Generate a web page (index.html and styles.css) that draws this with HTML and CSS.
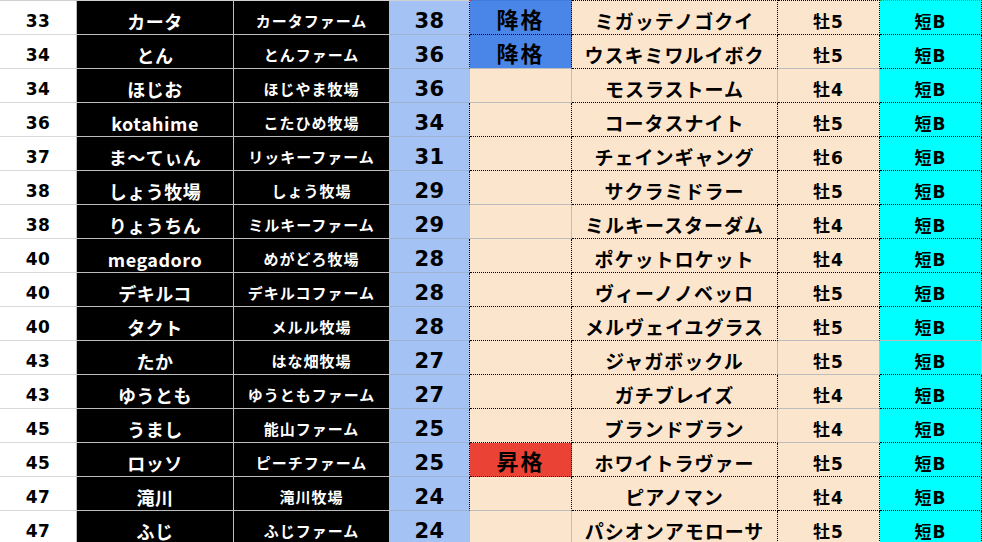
FILE: index.html
```html
<!DOCTYPE html>
<html lang="ja">
<head>
<meta charset="utf-8">
<title>Sheet</title>
<link rel="stylesheet" href="styles.css">
</head>
<body>
<div class="sheet">
  <div class="row first">
    <div class="c rk">33</div><div class="c nm">カータ</div><div class="c fm">カータファーム</div><div class="c sc dr">38</div><div class="c st down db dr top-red">降格</div><div class="c hs db dr top-dot">ミガッテノゴクイ</div><div class="c sx db dr top-dot">牡5</div><div class="c gr db dr top-green">短B</div>
  </div>
  <div class="row">
    <div class="c rk">34</div><div class="c nm">とん</div><div class="c fm">とんファーム</div><div class="c sc dr">36</div><div class="c st down dr">降格</div><div class="c hs db dr">ウスキミワルイボク</div><div class="c sx dr">牡5</div><div class="c gr db dr">短B</div>
  </div>
  <div class="row">
    <div class="c rk">34</div><div class="c nm">ほじお</div><div class="c fm">ほじやま牧場</div><div class="c sc">36</div><div class="c st"></div><div class="c hs db">モスラストーム</div><div class="c sx db">牡4</div><div class="c gr db dr">短B</div>
  </div>
  <div class="row">
    <div class="c rk">36</div><div class="c nm">kotahime</div><div class="c fm">こたひめ牧場</div><div class="c sc dr">34</div><div class="c st db dr"></div><div class="c hs db dr">コータスナイト</div><div class="c sx db dr">牡5</div><div class="c gr db dr">短B</div>
  </div>
  <div class="row">
    <div class="c rk">37</div><div class="c nm">ま〜てぃん</div><div class="c fm">リッキーファーム</div><div class="c sc dr">31</div><div class="c st db dr"></div><div class="c hs db dr">チェインギャング</div><div class="c sx db dr">牡6</div><div class="c gr db dr">短B</div>
  </div>
  <div class="row">
    <div class="c rk">38</div><div class="c nm">しょう牧場</div><div class="c fm">しょう牧場</div><div class="c sc dr">29</div><div class="c st dr"></div><div class="c hs db dr">サクラミドラー</div><div class="c sx db dr">牡5</div><div class="c gr db dr">短B</div>
  </div>
  <div class="row">
    <div class="c rk">38</div><div class="c nm">りょうちん</div><div class="c fm">ミルキーファーム</div><div class="c sc">29</div><div class="c st"></div><div class="c hs db dr">ミルキースターダム</div><div class="c sx db dr">牡4</div><div class="c gr db dr">短B</div>
  </div>
  <div class="row">
    <div class="c rk">40</div><div class="c nm">megadoro</div><div class="c fm">めがどろ牧場</div><div class="c sc dr">28</div><div class="c st db dr"></div><div class="c hs db dr">ポケットロケット</div><div class="c sx db dr">牡4</div><div class="c gr db dr">短B</div>
  </div>
  <div class="row">
    <div class="c rk">40</div><div class="c nm">デキルコ</div><div class="c fm">デキルコファーム</div><div class="c sc dr">28</div><div class="c st db dr"></div><div class="c hs db dr">ヴィーノノベッロ</div><div class="c sx db dr">牡5</div><div class="c gr db dr">短B</div>
  </div>
  <div class="row">
    <div class="c rk">40</div><div class="c nm">タクト</div><div class="c fm">メルル牧場</div><div class="c sc dr">28</div><div class="c st db dr"></div><div class="c hs db dr">メルヴェイユグラス</div><div class="c sx dr">牡5</div><div class="c gr dr">短B</div>
  </div>
  <div class="row">
    <div class="c rk">43</div><div class="c nm">たか</div><div class="c fm">はな畑牧場</div><div class="c sc dr">27</div><div class="c st db dr"></div><div class="c hs db">ジャガボックル</div><div class="c sx">牡5</div><div class="c gr db">短B</div>
  </div>
  <div class="row">
    <div class="c rk">43</div><div class="c nm">ゆうとも</div><div class="c fm">ゆうともファーム</div><div class="c sc dr">27</div><div class="c st db dr"></div><div class="c hs db dr">ガチブレイズ</div><div class="c sx dr">牡4</div><div class="c gr db dr">短B</div>
  </div>
  <div class="row">
    <div class="c rk">45</div><div class="c nm">うまし</div><div class="c fm">能山ファーム</div><div class="c sc dr">25</div><div class="c st db dr"></div><div class="c hs db">ブランドブラン</div><div class="c sx">牡4</div><div class="c gr db dr">短B</div>
  </div>
  <div class="row">
    <div class="c rk">45</div><div class="c nm">ロッソ</div><div class="c fm">ピーチファーム</div><div class="c sc dr">25</div><div class="c st up db dr">昇格</div><div class="c hs db dr">ホワイトラヴァー</div><div class="c sx db dr">牡5</div><div class="c gr db dr">短B</div>
  </div>
  <div class="row">
    <div class="c rk">47</div><div class="c nm">滝川</div><div class="c fm">滝川牧場</div><div class="c sc dr">24</div><div class="c st dr"></div><div class="c hs db dr">ピアノマン</div><div class="c sx db dr">牡4</div><div class="c gr db dr">短B</div>
  </div>
  <div class="row">
    <div class="c rk">47</div><div class="c nm">ふじ</div><div class="c fm">ふじファーム</div><div class="c sc">24</div><div class="c st"></div><div class="c hs db dr">パシオンアモローサ</div><div class="c sx db dr">牡5</div><div class="c gr db dr">短B</div>
  </div>
</div>
</body>
</html>
```
FILE: styles.css
```css
html, body {
  margin: 0;
  padding: 0;
  background: #ffffff;
  overflow: hidden;
}

.sheet {
  display: flex;
  flex-direction: column;
  width: 982px;
}

.row {
  display: grid;
  grid-template-columns: 77px 157px 156px 80px 102px 206px 102px 102px;
  height: 34px;
}

.row.first {
  height: 35px;
}

.c {
  box-sizing: border-box;
  display: flex;
  align-items: center;
  justify-content: center;
  padding-top: 6px;
  border-right: 1px solid #bdbdbd;
  border-bottom: 1px solid #bdbdbd;
  font-family: "DejaVu Sans", "Noto Sans CJK JP", sans-serif;
  font-weight: 700;
  white-space: nowrap;
  color: #000;
}

.row.first .c {
  border-top: 1px solid #d0d0d0;
}

.rk {
  background: #ffffff;
  font-size: 17px;
  letter-spacing: 0.5px;
  border-bottom-color: #d9d9d9;
}

.nm, .fm {
  background: #000000;
  color: #ffffff;
  font-family: "Noto Sans CJK JP", sans-serif;
}

.nm {
  font-size: 18px;
  letter-spacing: 0.5px;
}

.fm {
  font-size: 15px;
  letter-spacing: 1px;
}

.sc {
  background: #a4c2f4;
  font-size: 21px;
  letter-spacing: 0.5px;
  border-bottom-color: #9fb3d1;
}

.st {
  background: #fce5cd;
  font-family: "Noto Sans CJK JP", sans-serif;
  font-size: 22px;
  letter-spacing: 2px;
  padding-top: 0;
}

.st.down {
  background: #4a86e8;
}

.st.up {
  background: #ea4335;
}

.hs {
  background: #fce5cd;
  font-family: "Noto Sans CJK JP", sans-serif;
  font-size: 19px;
  letter-spacing: 1px;
}

.sx {
  background: #fce5cd;
  font-size: 17px;
  letter-spacing: 1px;
}

.gr {
  background: #00ffff;
  font-size: 17px;
  letter-spacing: 1px;
}

.dr {
  border-right: 1px dotted #000000;
}

.db {
  border-bottom: 1px dotted #000000;
}

.row.first .top-red {
  border-top: 1px dotted #e53935;
}

.row.first .top-dot {
  border-top: 1px dotted #000000;
}

.row.first .top-green {
  border-top: 1px dotted #38b000;
}
```
